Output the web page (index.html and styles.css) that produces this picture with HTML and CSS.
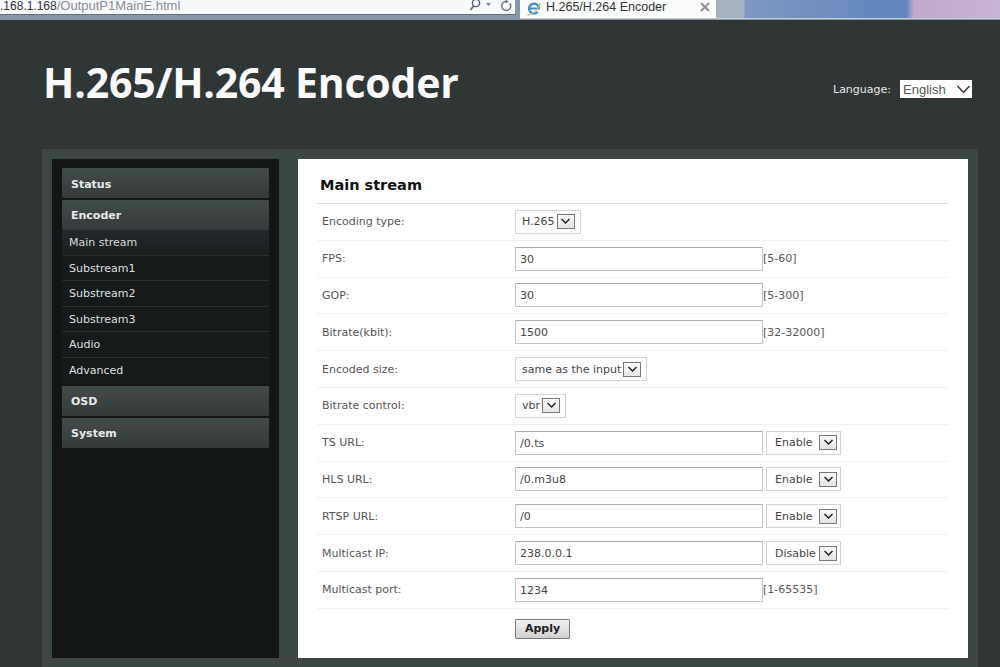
FILE: index.html
```html
<!DOCTYPE html>
<html lang="en">
<head>
<meta charset="utf-8">
<title>H.265/H.264 Encoder</title>
<link rel="stylesheet" href="styles.css">
</head>
<body>
<div class="chrome">
  <div class="address">
    <span class="url"><span class="host">.168.1.168</span><span class="path">/OutputP1MainE.html</span></span>
    <svg class="addr-icons" width="50" height="14" viewBox="0 0 50 14" aria-hidden="true">
      <circle cx="10" cy="4" r="3.6" fill="none" stroke="#5a6470" stroke-width="1.4"/>
      <path d="M7.500 7l-3 4" stroke="#5a6470" stroke-width="1.600" fill="none"/>
      <path d="M20 4h5l-2.500 3z" fill="#7a828c"/>
      <path d="M41 2.500a4.500 4.500 0 1 0 3 2" fill="none" stroke="#6a737d" stroke-width="1.400"/>
      <path d="M39.500 0.500l3 2-3 2z" fill="#6a737d"/>
    </svg>
  </div>
  <div class="tab">
    <svg class="ie" width="16" height="16" viewBox="0 0 16 16" aria-hidden="true">
      <path d="M3.500 8.500h9.500a5 5 0 1 0-1.200 3.400" fill="none" stroke="#2f8fd8" stroke-width="2.200"/>
      <path d="M1.500 14.500c2 1.500 9-2 13-11.500" fill="none" stroke="#e8b84a" stroke-width="1.200"/>
    </svg>
    <span class="tab-title">H.265/H.264 Encoder</span>
    <svg class="tab-close" width="10" height="10" viewBox="0 0 10 10" aria-hidden="true"><path d="M1 1l8 8M9 1l-8 8" stroke="#8b8f93" stroke-width="1.800" fill="none"/></svg>
  </div>
  <div class="desk"></div>
</div>
<div class="page">
  <header class="top">
    <h1>H.265/H.264 Encoder</h1>
    <div class="lang"><span>Language:</span><span class="lang-box">English<svg width="15" height="9" viewBox="0 0 15 9" aria-hidden="true"><path d="M1.500 1l6 6.500 6-6.500" fill="none" stroke="#333" stroke-width="1.500"/></svg></span></div>
  </header>
  <div class="panel">
    <nav class="side">
      <div class="head">Status</div>
      <div class="head">Encoder</div>
      <ul class="subs">
        <li class="cur">Main stream</li>
        <li>Substream1</li>
        <li>Substream2</li>
        <li>Substream3</li>
        <li>Audio</li>
        <li>Advanced</li>
      </ul>
      <div class="head">OSD</div>
      <div class="head">System</div>
    </nav>
    <main class="main">
      <h2>Main stream</h2>
      <div class="row"><label>Encoding type:</label><span class="sel">H.265<i class="drop"><svg width="11" height="7" viewBox="0 0 11 7"><path d="M1.500 1l4 4 4-4" fill="none" stroke="#222" stroke-width="1.500"/></svg></i></span></div>
      <div class="row"><label>FPS:</label><span class="inp">30</span><span class="hint">[5-60]</span></div>
      <div class="row"><label>GOP:</label><span class="inp">30</span><span class="hint">[5-300]</span></div>
      <div class="row"><label>Bitrate(kbit):</label><span class="inp">1500</span><span class="hint">[32-32000]</span></div>
      <div class="row"><label>Encoded size:</label><span class="sel">same as the input<i class="drop"><svg width="11" height="7" viewBox="0 0 11 7"><path d="M1.500 1l4 4 4-4" fill="none" stroke="#222" stroke-width="1.500"/></svg></i></span></div>
      <div class="row"><label>Bitrate control:</label><span class="sel">vbr<i class="drop"><svg width="11" height="7" viewBox="0 0 11 7"><path d="M1.500 1l4 4 4-4" fill="none" stroke="#222" stroke-width="1.500"/></svg></i></span></div>
      <div class="row"><label>TS URL:</label><span class="inp">/0.ts</span><span class="sel sel-side">Enable<i class="drop"><svg width="11" height="7" viewBox="0 0 11 7"><path d="M1.500 1l4 4 4-4" fill="none" stroke="#222" stroke-width="1.500"/></svg></i></span></div>
      <div class="row"><label>HLS URL:</label><span class="inp">/0.m3u8</span><span class="sel sel-side">Enable<i class="drop"><svg width="11" height="7" viewBox="0 0 11 7"><path d="M1.500 1l4 4 4-4" fill="none" stroke="#222" stroke-width="1.500"/></svg></i></span></div>
      <div class="row"><label>RTSP URL:</label><span class="inp">/0</span><span class="sel sel-side">Enable<i class="drop"><svg width="11" height="7" viewBox="0 0 11 7"><path d="M1.500 1l4 4 4-4" fill="none" stroke="#222" stroke-width="1.500"/></svg></i></span></div>
      <div class="row"><label>Multicast IP:</label><span class="inp">238.0.0.1</span><span class="sel sel-side">Disable<i class="drop"><svg width="11" height="7" viewBox="0 0 11 7"><path d="M1.500 1l4 4 4-4" fill="none" stroke="#222" stroke-width="1.500"/></svg></i></span></div>
      <div class="row"><label>Multicast port:</label><span class="inp">1234</span><span class="hint">[1-65535]</span></div>
      <div class="actions"><button class="apply" type="button">Apply</button></div>
    </main>
  </div>
</div>
</body>
</html>
```
FILE: styles.css
```css
* { box-sizing: border-box; }
html, body { margin: 0; height: 667px; overflow: hidden; }
body { background: #2f3736; font-family: "DejaVu Sans", sans-serif; font-size: 11px; color: #444; }

.chrome { height: 20px; display: flex; align-items: flex-start; background: #8496a8; border-bottom: 1px solid #8a97a6; }
.address { width: 515px; height: 15px; background: #f7f9fb; border-bottom: 1px solid #5f7184; display: flex; justify-content: space-between; align-items: flex-start; font-family: "Liberation Sans", sans-serif; font-size: 12px; color: #8a8f96; }
.url { line-height: 12px; white-space: nowrap; }
.host { color: #333; }
.path { font-size: 13px; color: #8a8f96; }
.addr-icons { margin-top: -1px; margin-right: -1px; }
.tab { margin-left: 5px; width: 196px; height: 19px; background: #fbfcfc; border-bottom: 1px solid #c8ccd0; display: flex; align-items: flex-start; font-family: "Liberation Sans", sans-serif; font-size: 12.5px; color: #333; padding-left: 6px; }
.ie { margin-right: 4px; flex: none; }
.tab-title { flex: 1; line-height: 14px; }
.tab-close { margin: 2px 6px 0 0; flex: none; }
.desk { flex: 1; height: 19px; background: linear-gradient(90deg, #a6b2c2 0, #a6b2c2 28px, #7d98c4 29px, #5f86bd 190px, #c2a8cc 198px, #c8b4d4 100%); border-bottom: 1px solid #c0ccd8; }

.page { height: 647px; padding: 0 22px 0 42px; }
.top { height: 129px; display: flex; justify-content: space-between; align-items: flex-start; padding-left: 1px; }
.top h1 { margin: 36px 0 0; font-family: "Open Sans", sans-serif; font-weight: 700; font-size: 41px; line-height: 52px; color: #fafafa; letter-spacing: -0.2px; }
.lang { margin-top: 60px; margin-right: 6px; display: flex; align-items: center; gap: 9px; color: #e6e8e8; font-size: 11px; }
.lang-box { width: 72px; height: 18px; background: #fff; color: #555; font-size: 13px; font-family: "Liberation Sans", sans-serif; display: flex; align-items: center; justify-content: space-between; padding: 0 1px 0 3px; }

.panel { width: 936px; height: 518px; background: #3b4745; padding: 10px; display: flex; gap: 19px; align-items: stretch; }
.side { width: 227px; height: 499px; background: #121617; padding: 9px 10px 0; }
.head { height: 30px; margin-bottom: 2px; background: linear-gradient(#404d4b, #333b3a); color: #e8ebea; font-weight: 700; font-size: 11px; line-height: 32px; padding-left: 9px; border-radius: 1px; }
.head:first-child { line-height: 33px; }
.subs { list-style: none; margin: -2px 0 2px; padding: 0; }
.subs li { height: 25.6px; line-height: 26.4px; padding-left: 7px; color: #dde0e0; font-size: 11px; border-bottom: 1px solid #2a2f30; background: #151a1b; }
.subs li:last-child { border-bottom: 0; }
.subs li.cur { background: linear-gradient(#23292a, #1a1f20); color: #d3dcd8; }

.main { width: 670px; height: 499px; background: #fff; padding: 15px 20px 0 19px; }
.main h2 { margin: 0; height: 30px; font-size: 14.5px; font-weight: 700; line-height: 23px; color: #111; border-bottom: 1px solid #dcdcdc; padding-left: 3px; }
.row { height: 36.8px; display: flex; align-items: center; border-bottom: 1px solid #f1f1f1; color: #555; }
.row label { width: 198px; padding-left: 5px; flex: none; }
.inp { width: 248px; height: 24px; border: 1px solid #c4c4c4; border-top-color: #aaa; padding-left: 4px; line-height: 23px; color: #444; flex: none; }
.hint { color: #555; white-space: nowrap; }
.sel { height: 24px; border: 1px solid #d2d2d2; display: inline-flex; align-items: center; gap: 2px; padding: 0 5px 0 6px; color: #444; }
.sel-side { margin-left: 3px; width: 75px; justify-content: space-between; padding: 0 3px 0 8px; }
.drop { width: 18px; height: 15px; border: 1px solid #777; background: linear-gradient(#fafafa, #e4e4e4); display: flex; align-items: center; justify-content: center; font-style: normal; }
.actions { padding: 10px 0 0 198px; }
.apply { width: 55px; height: 20px; padding: 0; font: 700 11px "DejaVu Sans", sans-serif; color: #222; background: linear-gradient(#f4f4f4, #cfcfcf); border: 1px solid #777; border-radius: 1px; }
```
